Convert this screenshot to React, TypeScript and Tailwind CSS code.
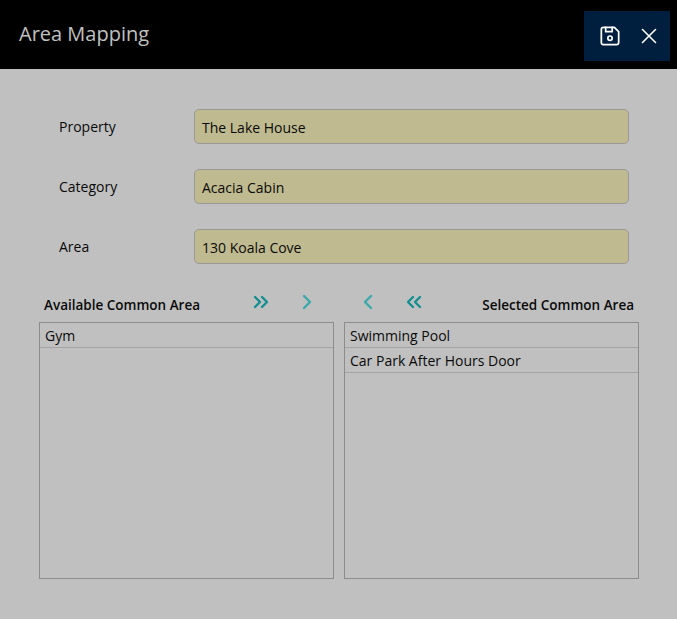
import React from "react";
import { ChevronLeft, ChevronRight, ChevronsLeft, ChevronsRight, X } from "lucide-react";

const font = { fontFamily: '"Open Sans", sans-serif' };

const fields = [
  { label: "Property", value: "The Lake House" },
  { label: "Category", value: "Acacia Cabin" },
  { label: "Area", value: "130 Koala Cove" },
];

function FloppyIcon() {
  return (
    <svg width="26" height="26" viewBox="0 0 24 24" fill="none" stroke="currentColor" strokeWidth="1.6" strokeLinecap="round" strokeLinejoin="round">
      <path d="M6 4h10l4 4v10a2 2 0 0 1 -2 2h-12a2 2 0 0 1 -2 -2v-12a2 2 0 0 1 2 -2" />
      <circle cx="12" cy="14" r="2" />
      <path d="M14 4v4h-6v-4" />
    </svg>
  );
}

function ListBox({ items }: { items: string[] }) {
  return (
    <div className="h-[257px] w-[295px] border border-[#8c8c8c]">
      {items.map((item) => (
        <div key={item} className="h-[25px] border-b border-[#a3a3a3] pl-[5px] text-[14px] leading-[26px] text-[#0a0a0a]">
          {item}
        </div>
      ))}
    </div>
  );
}

export default function App() {
  return (
    <div style={font} className="h-[619px] w-[677px] overflow-hidden bg-[#c0c0c0]">
      <header className="flex h-[69px] items-center justify-between bg-black pl-[19px] pr-[7px]">
        <h1 className="pb-[2px] text-[20px] leading-[28px] text-[#c0c0c0]">Area Mapping</h1>
        <div className="mt-[3px] flex h-[50px] w-[86px] items-center gap-[13px] bg-[#001f3f] pl-[13px] text-white">
          <FloppyIcon />
          <X size={26} strokeWidth={1.5} />
        </div>
      </header>

      <div className="flex flex-col gap-[25px] pl-[59px] pt-[40px]">
        {fields.map((f) => (
          <div key={f.label} className="flex items-center">
            <label className="w-[135px] text-[14px] text-[#0a0a0a]">{f.label}</label>
            <div className="h-[35px] w-[435px] rounded-[5px] border border-[#999999] bg-[#bfba8f] pl-[7px] text-[14px] leading-[35px] text-[#0a0a0a]">
              {f.value}
            </div>
          </div>
        ))}
      </div>

      <div className="mt-[27px] flex h-[27px] items-center pl-[44px] pr-[43px] text-[13.5px] font-semibold text-[#0a0a0a]">
        <span className="w-[204px] pt-[2px]">Available Common Area</span>
        <ChevronsRight size={24} strokeWidth={2.4} className="-mt-[5px] ml-[1px] text-[#148f91]" />
        <ChevronRight size={24} strokeWidth={2.4} className="-mt-[5px] ml-[22px] text-[#3ba9aa]" />
        <ChevronLeft size={24} strokeWidth={2.4} className="-mt-[5px] ml-[37px] text-[#3ba9aa]" />
        <ChevronsLeft size={24} strokeWidth={2.4} className="-mt-[5px] ml-[22px] text-[#148f91]" />
        <span className="ml-auto pt-[2px]">Selected Common Area</span>
      </div>

      <div className="mt-[4px] flex gap-[10px] pl-[39px]">
        <ListBox items={["Gym"]} />
        <ListBox items={["Swimming Pool", "Car Park After Hours Door"]} />
      </div>
    </div>
  );
}
